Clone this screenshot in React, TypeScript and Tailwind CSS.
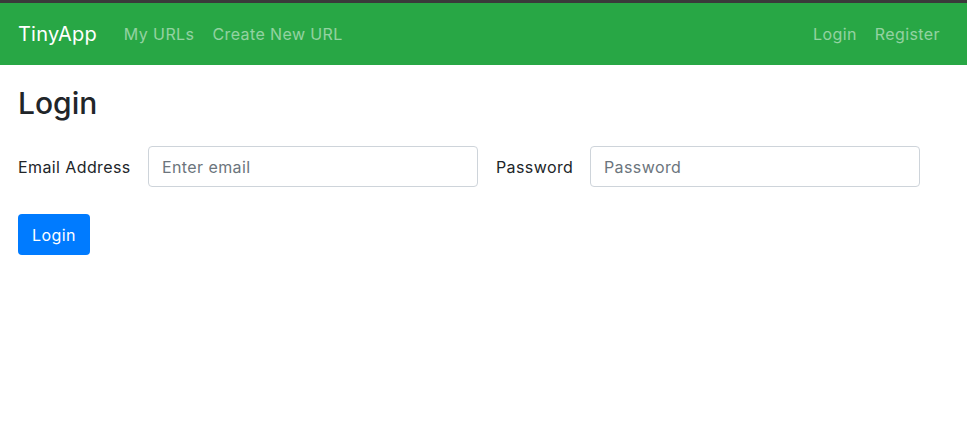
import React from 'react';

export default function App() {
  const leftLinks = ['My URLs', 'Create New URL'];
  const rightLinks = ['Login', 'Register'];

  return (
    <div className="min-h-screen bg-white font-['Inter',sans-serif] tracking-[0.4px] text-[#212529]">
      {/* Navbar */}
      <nav className="flex h-[65px] items-center border-t-[3px] border-[#3a3a3a] bg-[#28a745] pl-[18px] pr-[27px]">
        <a href="#" className="mr-[27px] text-[20px] tracking-[0.2px] text-white">
          TinyApp
        </a>
        <div className="flex items-center gap-[18px]">
          {leftLinks.map((label) => (
            <a key={label} href="#" className="text-[16px] text-white/50">
              {label}
            </a>
          ))}
        </div>
        <div className="ml-auto flex items-center gap-[18px]">
          {rightLinks.map((label) => (
            <a key={label} href="#" className="text-[16px] text-white/50">
              {label}
            </a>
          ))}
        </div>
      </nav>

      {/* Login form */}
      <main className="px-[18px]">
        <h1 className="mt-[20px] text-[30px] font-medium leading-[36px] tracking-normal">Login</h1>
        <form className="mt-[25px]">
          <div className="flex items-center">
            <label className="w-[130px] text-[16px]">Email Address</label>
            <input
              type="email"
              placeholder="Enter email"
              className="h-[41px] w-[330px] rounded-[4px] border border-[#ced4da] px-[13px] text-[16px] placeholder:text-[#6c757d]"
            />
            <label className="ml-[18px] w-[94px] text-[16px]">Password</label>
            <input
              type="password"
              placeholder="Password"
              className="h-[41px] w-[330px] rounded-[4px] border border-[#ced4da] px-[13px] text-[16px] placeholder:text-[#6c757d]"
            />
          </div>
          <button
            type="submit"
            className="mt-[27px] h-[41px] w-[72px] rounded-[4px] bg-[#007bff] text-[16px] text-white"
          >
            Login
          </button>
        </form>
      </main>
    </div>
  );
}
